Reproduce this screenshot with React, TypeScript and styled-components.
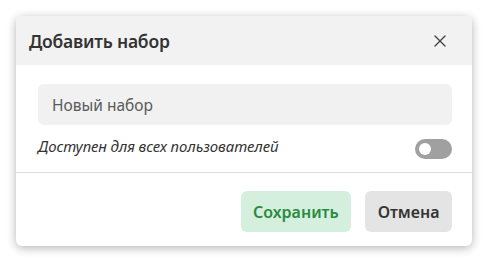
import React from "react";
import styled, { createGlobalStyle } from "styled-components";

const Global = createGlobalStyle`
  html, body { margin: 0; padding: 0; background: #ffffff; }
  body { font-family: "Noto Sans", "Open Sans", sans-serif; }
  * { box-sizing: border-box; }
`;

const Page = styled.div`
  padding: 16px;
`;

const Dialog = styled.div`
  width: 456px;
  height: 230px;
  background: #ffffff;
  border-radius: 6px;
  box-shadow: 0 2px 10px rgba(0, 0, 0, 0.3);
  display: flex;
  flex-direction: column;
  overflow: hidden;
`;

const Header = styled.div`
  height: 49px;
  background: #f2f2f2;
  display: flex;
  align-items: center;
  justify-content: space-between;
  padding: 0 25px 0 13px;
`;

const Title = styled.h2`
  margin: 0;
  font-size: 17.5px;
  font-weight: 600;
  color: #333333;
  letter-spacing: -0.2px;
`;

const CloseButton = styled.button`
  border: none;
  background: none;
  padding: 0;
  width: 14px;
  height: 14px;
  display: flex;
  align-items: center;
  justify-content: center;
  color: #444;
  cursor: pointer;
`;

const Body = styled.div`
  padding: 19px 20px 12px 22px;
  display: flex;
  flex-direction: column;
  gap: 14px;
  border-bottom: 1px solid #dddddd;
`;

const Input = styled.input`
  height: 41px;
  width: 100%;
  border: none;
  border-radius: 6px;
  background: #f1f1f1;
  padding: 0 14px;
  font-family: inherit;
  font-size: 15.5px;
  color: #333;
  outline: none;
  &::placeholder { color: #5a5a5a; }
`;

const Row = styled.div`
  display: flex;
  align-items: flex-start;
  justify-content: space-between;
  height: 21px;
`;

const Label = styled.span`
  font-style: italic;
  font-size: 15px;
  line-height: 16px;
  margin-top: -1px;
  letter-spacing: -0.1px;
  color: #333;
`;

const Toggle = styled.div<{ $on?: boolean }>`
  width: 37px;
  height: 20px;
  border-radius: 10px;
  background: ${(p) => (p.$on ? "#2a8a3e" : "#a0a0a0")};
  padding: 4px;
  display: flex;
  justify-content: ${(p) => (p.$on ? "flex-end" : "flex-start")};
`;

const Knob = styled.div`
  width: 12px;
  height: 12px;
  border-radius: 50%;
  background: #ffffff;
`;

const Footer = styled.div`
  flex: 1;
  display: flex;
  justify-content: flex-end;
  align-items: flex-start;
  gap: 14px;
  padding: 18px 20px 0 0;
`;

const Button = styled.button<{ $variant: "primary" | "secondary" }>`
  height: 41px;
  border: none;
  border-radius: 6px;
  padding: 0 12.5px;
  font-family: inherit;
  font-size: 16px;
  font-weight: 600;
  cursor: pointer;
  background: ${(p) => (p.$variant === "primary" ? "#d5efdf" : "#e4e4e4")};
  color: ${(p) => (p.$variant === "primary" ? "#2a8a3e" : "#333333")};
`;

export default function App() {
  return (
    <Page>
      <Global />
      <Dialog>
        <Header>
          <Title>Добавить набор</Title>
          <CloseButton aria-label="Закрыть">
            <svg width="12" height="12" viewBox="0 0 12 12">
              <path d="M1 1L11 11M11 1L1 11" stroke="currentColor" strokeWidth="1.4" strokeLinecap="round" />
            </svg>
          </CloseButton>
        </Header>
        <Body>
          <Input placeholder="Новый набор" />
          <Row>
            <Label>Доступен для всех пользователей</Label>
            <Toggle>
              <Knob />
            </Toggle>
          </Row>
        </Body>
        <Footer>
          <Button $variant="primary">Сохранить</Button>
          <Button $variant="secondary">Отмена</Button>
        </Footer>
      </Dialog>
    </Page>
  );
}
